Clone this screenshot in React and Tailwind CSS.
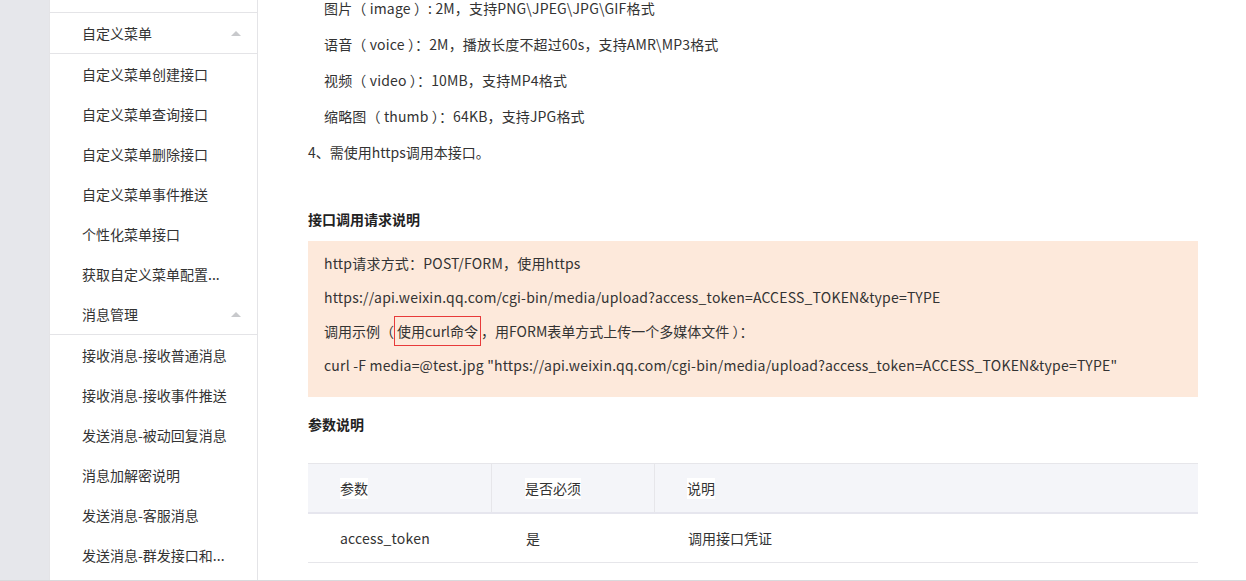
import React from "react";

const font = { fontFamily: '"Noto Sans CJK SC", "Noto Sans", sans-serif' };

const Caret = () => (
  <svg width="10" height="5" viewBox="0 0 10 5" className="mr-[16px]">
    <path d="M0 5 L5 0 L10 5 Z" fill="#c8c9cc" />
  </svg>
);

const menuGroups = [
  {
    title: "自定义菜单",
    items: [
      "自定义菜单创建接口",
      "自定义菜单查询接口",
      "自定义菜单删除接口",
      "自定义菜单事件推送",
      "个性化菜单接口",
      "获取自定义菜单配置...",
    ],
  },
  {
    title: "消息管理",
    items: [
      "接收消息-接收普通消息",
      "接收消息-接收事件推送",
      "发送消息-被动回复消息",
      "消息加解密说明",
      "发送消息-客服消息",
      "发送消息-群发接口和...",
    ],
  },
];

const Sidebar = () => (
  <aside className="w-[209px] shrink-0 border-l border-r border-[#e4e4e7] bg-white">
    <div className="h-[13px] border-b border-[#e4e4e7]" />
    {menuGroups.map((g) => (
      <div key={g.title}>
        <div className="h-[41px] flex items-center justify-between pl-[32px] pt-[1px] border-b border-[#e4e4e7] text-[14px] text-[#333]">
          <span>{g.title}</span>
          <Caret />
        </div>
        {g.items.map((it) => (
          <div key={it} className="h-[40px] flex items-center pl-[32px] text-[14px] text-[#333]">
            {it}
          </div>
        ))}
      </div>
    ))}
  </aside>
);

const Content = () => (
  <main className="flex-1 pl-[50px] pr-[48px] text-[14px] text-[#333]">
    <div className="-mt-[10px]">
      <p className="leading-[36px] pl-[16px] tracking-[0.15px]">图片（ image ）: 2M，支持PNG\JPEG\JPG\GIF格式</p>
      <p className="leading-[36px] pl-[16px] tracking-[0.15px]">语音（ voice ）：2M，播放长度不超过60s，支持AMR\MP3格式</p>
      <p className="leading-[36px] pl-[16px] tracking-[0.15px]">视频（ video ）：10MB，支持MP4格式</p>
      <p className="leading-[36px] pl-[16px] tracking-[0.15px]">缩略图（ thumb ）：64KB，支持JPG格式</p>
      <p className="leading-[36px]">4、需使用https调用本接口。</p>
    </div>

    <h3 className="mt-[31px] leading-[36px] font-bold text-[#222]">接口调用请求说明</h3>
    <div className="mt-[4px] bg-[#fde9db] pl-[16px] pt-[5px] pb-[15px] tracking-[0.2px]">
      <p className="leading-[34px]">http请求方式：POST/FORM，使用https</p>
      <p className="leading-[34px]">https://api.weixin.qq.com/cgi-bin/media/upload?access_token=ACCESS_TOKEN&amp;type=TYPE</p>
      <p className="leading-[34px] tracking-normal">
        调用示例（
        <span className="border border-[#e83a3a] px-[2px] py-[4px]">使用curl命令</span>
        ，用FORM表单方式上传一个多媒体文件 ）：
      </p>
      <p className="leading-[34px]">curl -F media=@test.jpg "https://api.weixin.qq.com/cgi-bin/media/upload?access_token=ACCESS_TOKEN&amp;type=TYPE"</p>
    </div>

    <h3 className="mt-[9px] leading-[36px] font-bold text-[#222]">参数说明</h3>

    <div className="mt-[21px] border-t border-[#e6e6ea]">
      <div className="grid grid-cols-[184px_163px_1fr] h-[50px] bg-[#f4f5f9] border-b-2 border-[#e6e6ee]">
        <div className="flex items-center pl-[32px] border-r border-[#e6e6ea]">
          <span className="bg-white text-[#333]">参数</span>
        </div>
        <div className="flex items-center pl-[33px] border-r border-[#e6e6ea]">
          <span className="bg-white text-[#333]">是否必须</span>
        </div>
        <div className="flex items-center pl-[32px]">
          <span className="bg-white text-[#333]">说明</span>
        </div>
      </div>
      <div className="grid grid-cols-[184px_163px_1fr] h-[49px] border-b border-[#e6e6ea]">
        <div className="flex items-center pl-[32px] tracking-[0.2px]">access_token</div>
        <div className="flex items-center pl-[34px]">是</div>
        <div className="flex items-center pl-[33px]">调用接口凭证</div>
      </div>
    </div>
  </main>
);

export default function App() {
  return (
    <div className="h-[581px] w-[1246px] overflow-hidden flex bg-white border-b border-[#d9d9dc]" style={font}>
      <div className="w-[49px] shrink-0 bg-[#e6e7eb]" />
      <Sidebar />
      <Content />
    </div>
  );
}
